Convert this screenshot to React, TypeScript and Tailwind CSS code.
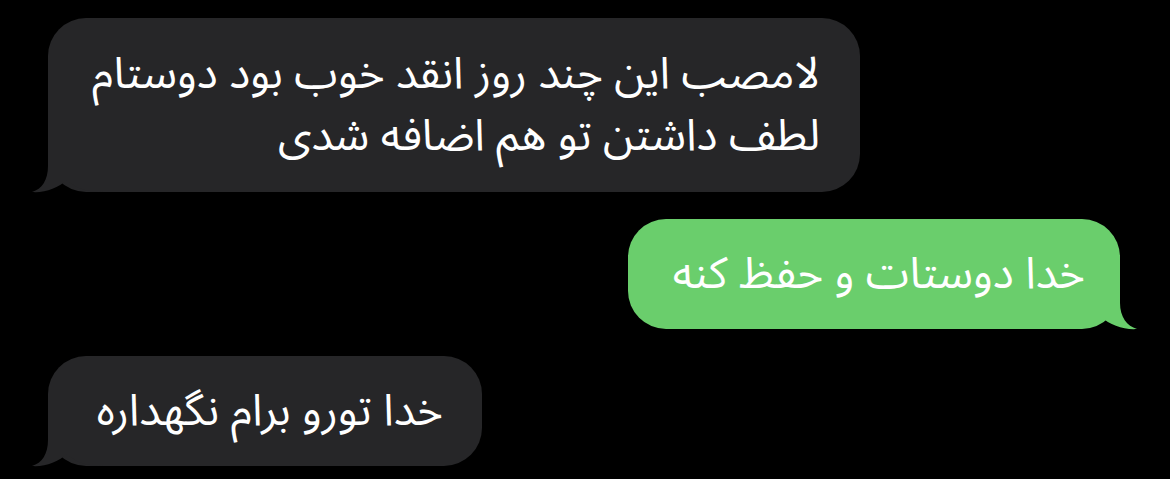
import React from "react";

const GRAY = "#262628";
const GREEN = "#6ace6c";

function TailLeft({ color }: { color: string }) {
  return (
    <svg
      className="absolute bottom-0 left-[-16px]"
      width={72}
      height={44}
      viewBox="-16 -44 72 44"
      overflow="visible"
    >
      <path
        d="M0,-44 L0,-26 C0,-12 -6,-3 -16,0 C-3,1 10,-4 19,-12 C28,-3 40,0 56,0 L56,-44 Z"
        fill={color}
      />
    </svg>
  );
}

function TailRight({ color }: { color: string }) {
  return (
    <svg
      className="absolute bottom-0 right-[-17px]"
      width={73}
      height={44}
      viewBox="-56 -44 73 44"
      overflow="visible"
    >
      <path
        d="M0,-44 L0,-26 C0,-12 7,-3 17,0 C4,1 -10,-4 -19,-12 C-28,-3 -40,0 -56,0 L-56,-44 Z"
        fill={color}
      />
    </svg>
  );
}

export default function App() {
  const font = {
    fontFamily: '"Noto Sans Arabic", "DejaVu Sans", "Noto Sans", sans-serif',
  };
  return (
    <div className="w-[1170px] h-[479px] bg-black overflow-hidden flex flex-col pt-[18px] gap-[27px]" style={font}>
      <div className="pl-[48px] flex">
        <div className="relative w-[812px] h-[174px] rounded-[38px] bg-[#262628] text-white text-[44px] leading-[62px] pr-[40px] pl-[20px] py-[25px] whitespace-nowrap" dir="rtl">
          <TailLeft color={GRAY} />
          <div className="relative">لامصب این چند روز انقد خوب بود دوستام</div>
          <div className="relative">لطف داشتن تو هم اضافه شدی</div>
        </div>
      </div>
      <div className="pr-[50px] flex justify-end">
        <div className="relative w-[492px] h-[110px] rounded-[38px] bg-[#6ace6c] text-white text-[44px] leading-[62px] px-[35px] py-[24px] whitespace-nowrap" dir="rtl">
          <TailRight color={GREEN} />
          <div className="relative">خدا دوستات و حفظ کنه</div>
        </div>
      </div>
      <div className="pl-[48px] flex">
        <div className="relative w-[434px] h-[110px] rounded-[38px] bg-[#262628] text-white text-[44px] leading-[62px] pr-[39px] pl-[20px] py-[24px] whitespace-nowrap" dir="rtl">
          <TailLeft color={GRAY} />
          <div className="relative">خدا تورو برام نگهداره</div>
        </div>
      </div>
    </div>
  );
}
